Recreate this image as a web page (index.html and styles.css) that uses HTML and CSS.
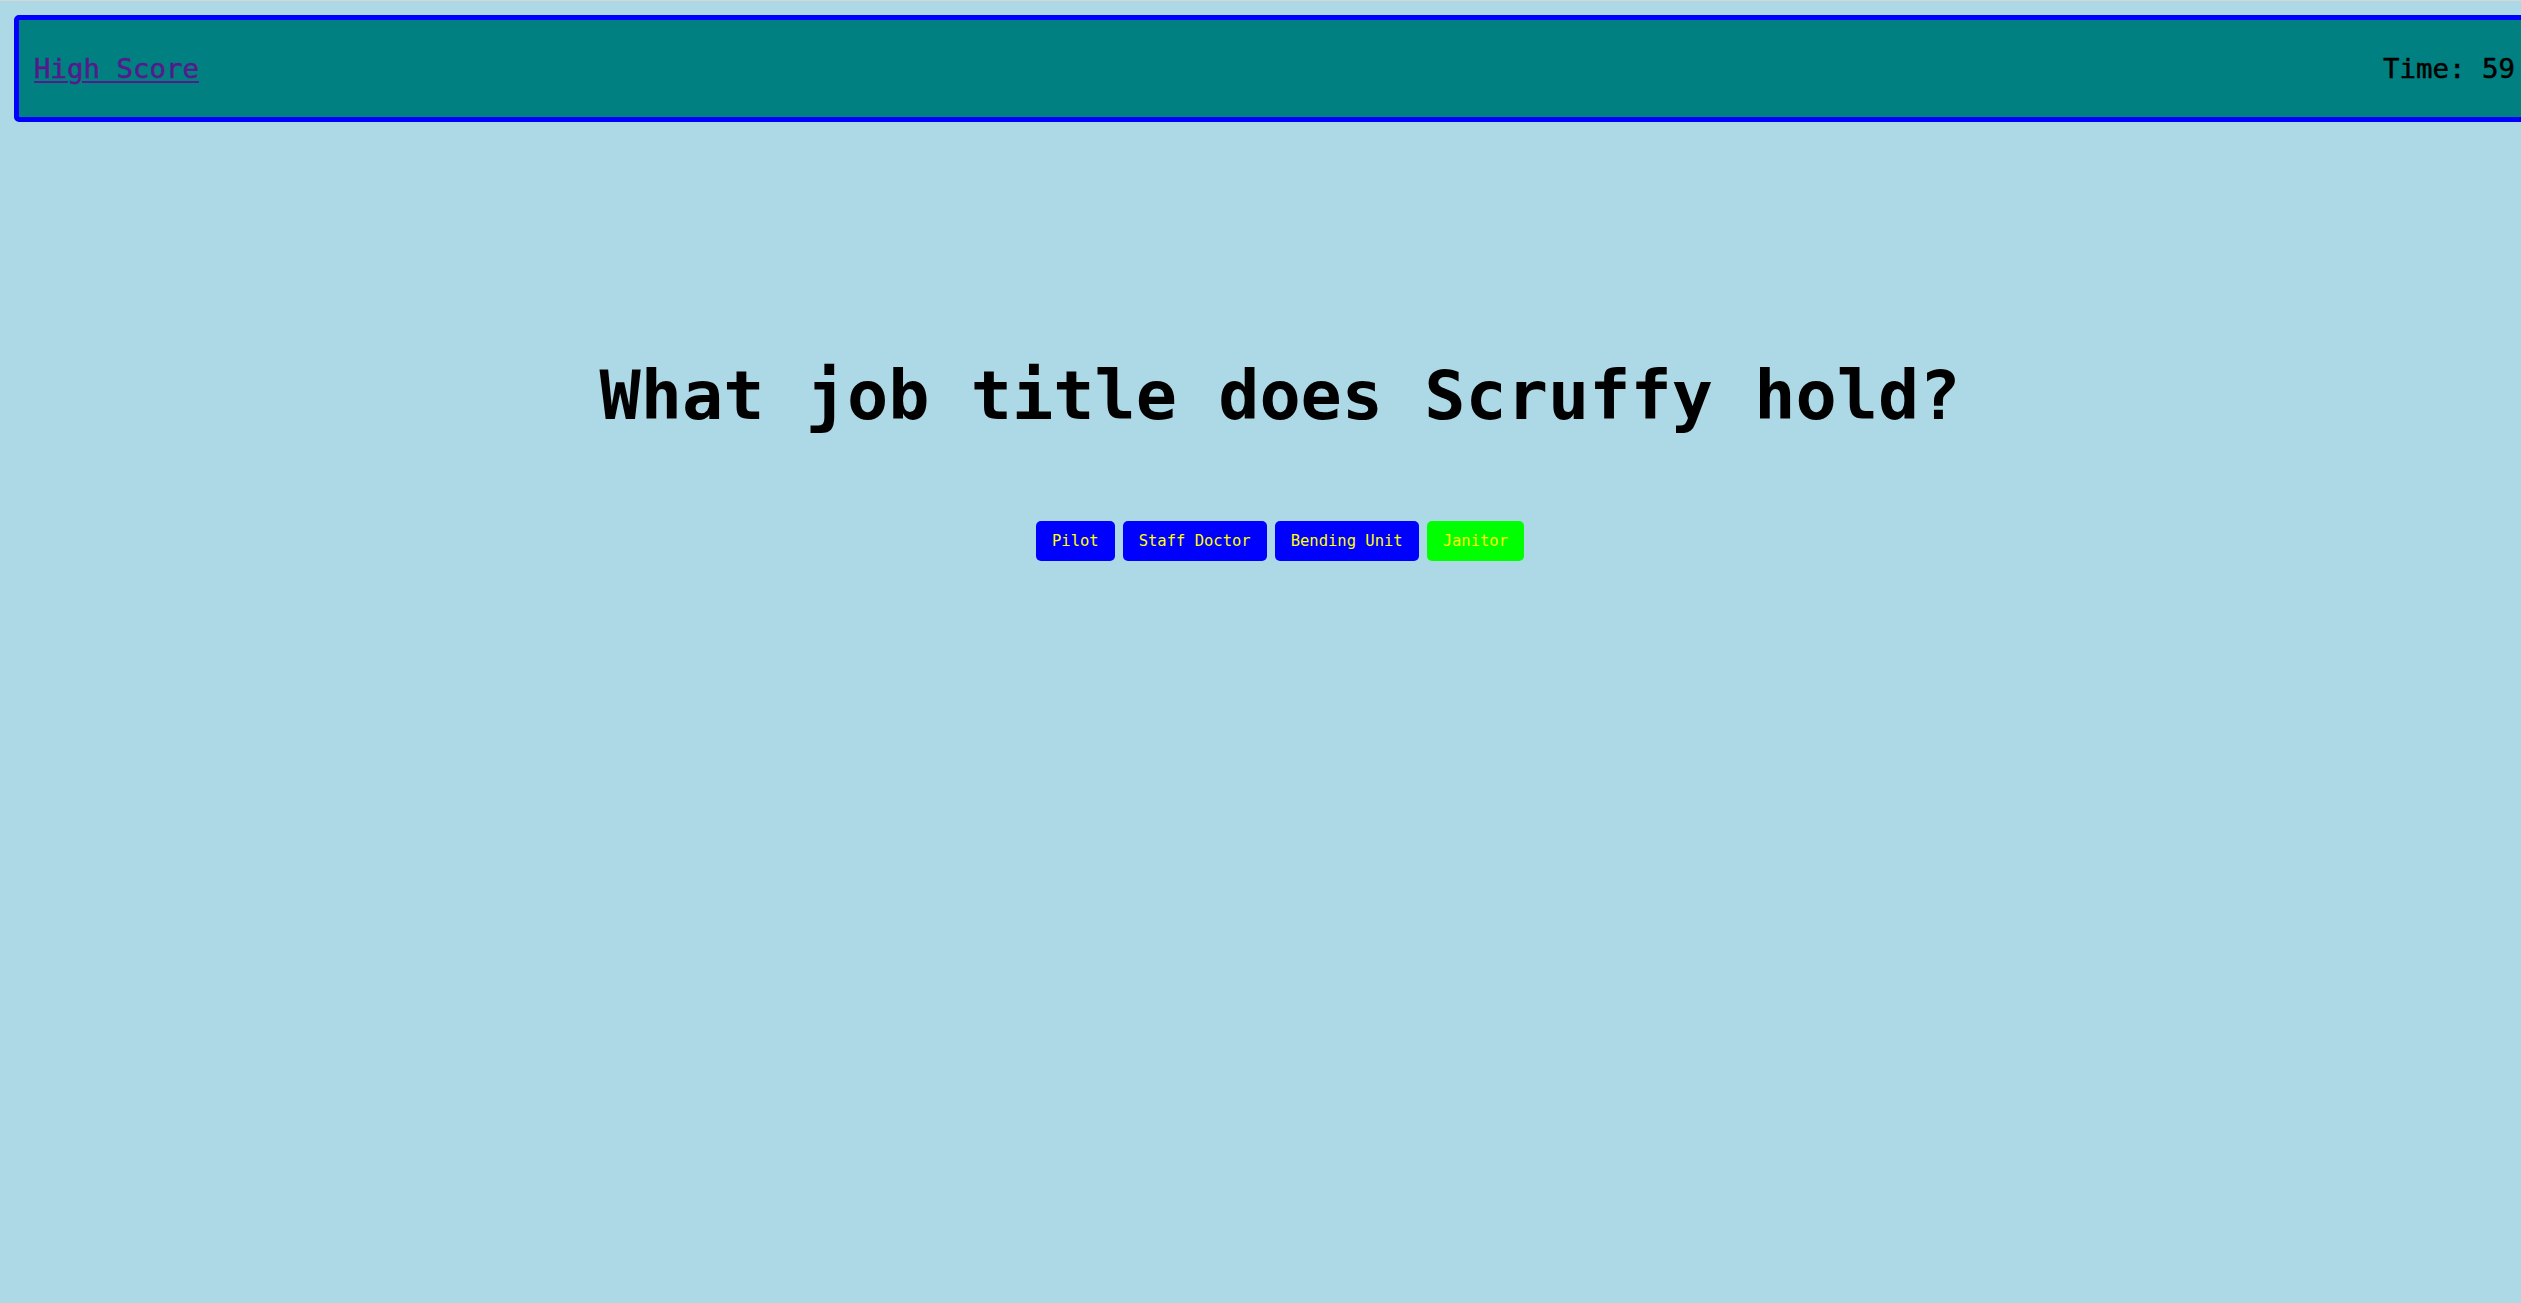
FILE: index.html
```html
<!DOCTYPE html>
<html lang="en">
<head>
<meta charset="utf-8">
<title>Quiz</title>
<link rel="stylesheet" href="styles.css">
</head>
<body>
<header class="topbar">
  <a class="hs-link" href="#">High Score</a>
  <span class="timer">Time: 59</span>
</header>
<main class="quiz">
  <h1 class="question">What job title does Scruffy hold?</h1>
  <div class="answers">
    <button class="answer">Pilot</button>
    <button class="answer">Staff Doctor</button>
    <button class="answer">Bending Unit</button>
    <button class="answer correct">Janitor</button>
  </div>
</main>
</body>
</html>
```
FILE: styles.css
```css
html {
  overflow: hidden;
  background: #add8e6;
}
body {
  margin: 0;
  min-height: 1303px;
  background: #add8e6;
  border-top: 1px solid #d6d6d6;
  font-family: "DejaVu Sans Mono", monospace;
}
.topbar {
  box-sizing: border-box;
  width: 100%;
  height: 107px;
  margin: 14px 0 0 14px;
  padding: 0 15px;
  background: #008080;
  border: 5px solid #0000ff;
  border-radius: 5px;
  display: flex;
  align-items: center;
  justify-content: space-between;
  font-size: 27.4px;
  -webkit-text-stroke: 0.5px currentColor;
}
.hs-link {
  color: #551a8b;
  text-decoration: underline;
  text-decoration-thickness: 2px;
  text-underline-offset: 3px;
  -webkit-text-stroke: 0.5px #551a8b;
}
.timer {
  color: #000;
  -webkit-text-stroke: 0.5px #000;
}
.quiz {
  padding: 232px 0 0 39px;
  display: flex;
  flex-direction: column;
  align-items: center;
}
.question {
  margin: 0;
  font-size: 68.5px;
  line-height: 82px;
  font-weight: bold;
  color: #000;
}
.answers {
  margin-top: 85px;
  display: flex;
  gap: 8px;
}
.answer {
  font-family: "DejaVu Sans Mono", monospace;
  font-size: 15.5px;
  line-height: 20px;
  height: 40px;
  padding: 10px 16px;
  border: none;
  border-radius: 5px;
  background: #0000ff;
  color: #ffff00;
}
.answer.correct {
  background: #00ff00;
}
```
